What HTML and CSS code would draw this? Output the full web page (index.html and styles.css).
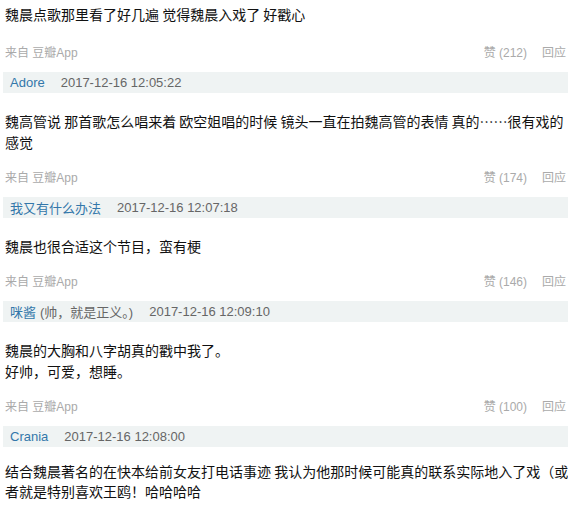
FILE: index.html
```html
<!DOCTYPE html>
<html lang="zh-CN">
<head>
    <meta charset="UTF-8">
    <meta name="viewport" content="width=device-width, initial-scale=1.0">
    <title>评论</title>
    <link rel="stylesheet" href="styles.css">
</head>
<body>
    <div class="comments">
        <div class="comment first">
            <p class="comment-text">魏晨点歌那里看了好几遍 觉得魏晨入戏了 好戳心</p>
            <div class="comment-meta">
                <span class="source">来自 豆瓣App</span>
                <span class="actions"><span>赞 (212)</span><span>回应</span></span>
            </div>
        </div>

        <div class="comment">
            <div class="comment-head">
                <a class="author" href="#">Adore</a>
                <span class="time">2017-12-16 12:05:22</span>
            </div>
            <p class="comment-text">魏高管说 那首歌怎么唱来着 欧空姐唱的时候 镜头一直在拍魏高管的表情 真的……很有戏的感觉</p>
            <div class="comment-meta">
                <span class="source">来自 豆瓣App</span>
                <span class="actions"><span>赞 (174)</span><span>回应</span></span>
            </div>
        </div>

        <div class="comment">
            <div class="comment-head">
                <a class="author" href="#">我又有什么办法</a>
                <span class="time">2017-12-16 12:07:18</span>
            </div>
            <p class="comment-text">魏晨也很合适这个节目，蛮有梗</p>
            <div class="comment-meta">
                <span class="source">来自 豆瓣App</span>
                <span class="actions"><span>赞 (146)</span><span>回应</span></span>
            </div>
        </div>

        <div class="comment">
            <div class="comment-head">
                <a class="author" href="#">咪酱</a>
                <span class="sign">(帅，就是正义。)</span>
                <span class="time">2017-12-16 12:09:10</span>
            </div>
            <p class="comment-text">魏晨的大胸和八字胡真的戳中我了。<br>好帅，可爱，想睡。</p>
            <div class="comment-meta">
                <span class="source">来自 豆瓣App</span>
                <span class="actions"><span>赞 (100)</span><span>回应</span></span>
            </div>
        </div>

        <div class="comment last">
            <div class="comment-head">
                <a class="author" href="#">Crania</a>
                <span class="time">2017-12-16 12:08:00</span>
            </div>
            <p class="comment-text">结合魏晨著名的在快本给前女友打电话事迹 我认为他那时候可能真的联系实际地入了戏（或者就是特别喜欢王鸥！哈哈哈哈</p>
        </div>
    </div>
</body>
</html>
```

FILE: styles.css
```css
body {
    margin: 0;
    background: #ffffff;
    font-family: "Liberation Sans", "Noto Sans CJK SC", sans-serif;
    color: #111111;
    overflow-x: hidden;
}

.comments {
    padding-left: 3px;
}

.comment {
    margin-bottom: 9px;
}

/* author line */
.comment-head {
    display: flex;
    align-items: center;
    height: 21px;
    padding-left: 7px;
    background: #eff3f3;
    font-size: 13px;
    color: #666666;
}

.author {
    color: #3377aa;
    text-decoration: none;
}

.sign {
    margin-left: 4px;
    color: #666666;
}

.time {
    margin-left: 16px;
}

/* comment body */
.comment-text {
    margin: 0 -6px 0 0;
    padding: 18px 0 0 2px;
    font-family: "Noto Sans CJK SC", sans-serif;
    font-size: 14px;
    line-height: 21px;
    color: #111111;
}

.first .comment-text {
    padding-top: 4px;
}

.last .comment-text {
    padding-top: 14px;
    line-height: 20px;
}

.comment-meta {
    display: flex;
    justify-content: space-between;
    margin-top: 15px;
    padding: 0 2px;
    font-size: 12px;
    line-height: 20px;
    color: #aaaaaa;
}

.first .comment-meta {
    margin-top: 18px;
}

.actions {
    display: flex;
    gap: 15px;
}
```
